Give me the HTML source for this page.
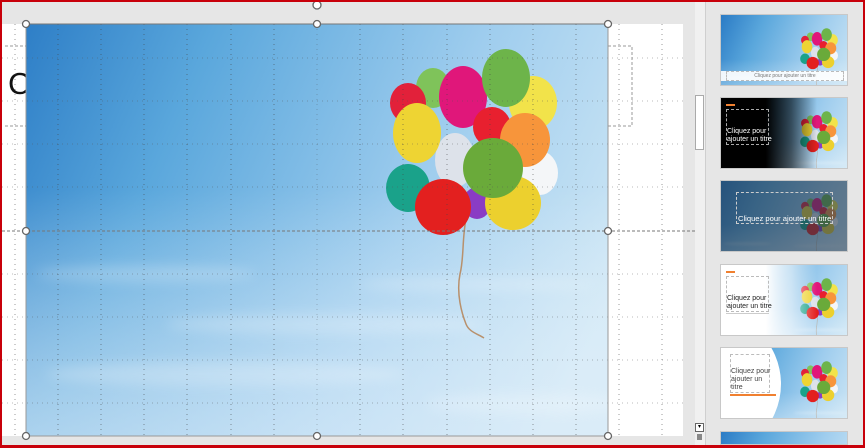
<!DOCTYPE html>
<html><head><meta charset="utf-8"><style>
*{margin:0;padding:0;box-sizing:border-box}
html,body{width:865px;height:448px;overflow:hidden}
body{background:#e6e6e6;font-family:"Liberation Sans",sans-serif;position:relative}
.abs{position:absolute}
.thumb{position:absolute;left:720px;width:128px;height:72px;overflow:hidden;border:1px solid #c8c8c8}
.thumb svg{position:absolute;left:0;top:0}
.tt{position:absolute;font-size:7px;line-height:9px}
.db{position:absolute;border:1px dashed #bbb}
</style></head><body>
<svg width="0" height="0" style="position:absolute">
<defs>
<linearGradient id="sky" x1="0" y1="0" x2="1" y2="0.6">
<stop offset="0" stop-color="#1a6cbd"/><stop offset="0.35" stop-color="#5aa7dc"/><stop offset="0.7" stop-color="#9fcdee"/><stop offset="1" stop-color="#cde6f5"/>
</linearGradient>
<linearGradient id="haze" x1="0" y1="0" x2="0" y2="1">
<stop offset="0.4" stop-color="#fff" stop-opacity="0"/><stop offset="1" stop-color="#e3f0fa" stop-opacity="0.6"/>
</linearGradient>
<filter id="blur"><feGaussianBlur stdDeviation="6"/></filter>
<symbol id="scene" viewBox="0 0 582 412" style="overflow:visible">
<rect x="0" y="-200" width="582" height="800" fill="url(#sky)"/>
<rect x="0" y="0" width="582" height="412" fill="url(#haze)"/>
<g fill="#fff" opacity="0.22" filter="url(#blur)">
<ellipse cx="120" cy="250" rx="110" ry="8"/><ellipse cx="300" cy="300" rx="160" ry="10"/><ellipse cx="450" cy="260" rx="120" ry="7"/><ellipse cx="200" cy="350" rx="180" ry="12"/><ellipse cx="500" cy="380" rx="100" ry="10"/>
</g>
<path d="M440 195 C436 215 438 235 434 250 C430 270 436 290 440 300 C443 308 452 310 458 314" stroke="#b8906c" stroke-width="1.5" fill="none"/>
<g>
<ellipse cx="407" cy="64" rx="17" ry="20" fill="#7fc35a"/>
<ellipse cx="382" cy="79" rx="18" ry="20" fill="#e2213a"/>
<ellipse cx="507" cy="79" rx="24" ry="27" fill="#f2e34a"/>
<ellipse cx="514" cy="149" rx="18" ry="22" fill="#f4f6f8"/>
<ellipse cx="437" cy="73" rx="24" ry="31" fill="#e0177a"/>
<ellipse cx="480" cy="54" rx="24" ry="29" fill="#6db44a"/>
<ellipse cx="466" cy="103" rx="19" ry="20" fill="#e8202f"/>
<ellipse cx="499" cy="116" rx="25" ry="27" fill="#f7953b"/>
<ellipse cx="429" cy="136" rx="20" ry="27" fill="#dde2ea"/>
<ellipse cx="391" cy="109" rx="24" ry="30" fill="#eed433"/>
<ellipse cx="451" cy="179" rx="14" ry="16" fill="#8a3cc4"/>
<ellipse cx="487" cy="179" rx="28" ry="27" fill="#ecd02e"/>
<ellipse cx="382" cy="164" rx="22" ry="24" fill="#1aa28a"/>
<ellipse cx="467" cy="144" rx="30" ry="30" fill="#6aaa3a"/>
<ellipse cx="417" cy="183" rx="28" ry="28" fill="#e3201f"/>
</g>
</symbol>
</defs></svg>

<div class="abs" style="left:2px;top:24px;width:681px;height:412px;background:#fff"></div>
<div class="abs" style="left:8px;top:66px;font-size:31px;font-weight:300;color:#111">C</div>
<svg class="abs" style="left:26px;top:24px" width="582" height="412"><use href="#scene" width="582" height="412"/></svg>
<svg class="abs" style="left:0;top:0" width="695" height="448">
<g stroke="#444" stroke-opacity="0.55" stroke-dasharray="1 4" stroke-width="1">
<line x1="15" y1="24" x2="15" y2="436"/><line x1="58" y1="24" x2="58" y2="436"/><line x1="101" y1="24" x2="101" y2="436"/><line x1="144" y1="24" x2="144" y2="436"/><line x1="187" y1="24" x2="187" y2="436"/><line x1="231" y1="24" x2="231" y2="436"/><line x1="274" y1="24" x2="274" y2="436"/><line x1="317" y1="24" x2="317" y2="436" stroke-opacity="0.3"/><line x1="360" y1="24" x2="360" y2="436"/><line x1="403" y1="24" x2="403" y2="436"/><line x1="447" y1="24" x2="447" y2="436"/><line x1="490" y1="24" x2="490" y2="436"/><line x1="533" y1="24" x2="533" y2="436"/><line x1="576" y1="24" x2="576" y2="436"/><line x1="619" y1="24" x2="619" y2="436"/><line x1="662" y1="24" x2="662" y2="436"/>
</g>
<g stroke="#555" stroke-opacity="0.4" stroke-dasharray="1 4">
<line x1="2" y1="58" x2="683" y2="58"/><line x1="2" y1="101" x2="683" y2="101"/><line x1="2" y1="144" x2="683" y2="144"/><line x1="2" y1="187" x2="683" y2="187"/><line x1="2" y1="274" x2="683" y2="274"/><line x1="2" y1="317" x2="683" y2="317"/><line x1="2" y1="360" x2="683" y2="360"/><line x1="2" y1="403" x2="683" y2="403"/>
</g>
<line x1="2" y1="231" x2="695" y2="231" stroke="#777" stroke-dasharray="3 2"/>
<path d="M5 46 H26 M5 126 H26 M608 46 H632 V126 H608" stroke="#999" fill="none" stroke-dasharray="3 2"/>
<rect x="26" y="24" width="582" height="412" fill="none" stroke="#999"/>
<line x1="26" y1="24" x2="608" y2="24" stroke="#777"/>
<g fill="#fff" stroke="#666" stroke-width="1.3">
<circle cx="26" cy="24" r="3.5"/><circle cx="317" cy="24" r="3.5"/><circle cx="608" cy="24" r="3.5"/><circle cx="26" cy="231" r="3.5"/><circle cx="608" cy="231" r="3.5"/><circle cx="26" cy="436" r="3.5"/><circle cx="317" cy="436" r="3.5"/><circle cx="608" cy="436" r="3.5"/><circle cx="317" cy="5" r="4"/>
</g>
</svg>

<div class="abs" style="left:695px;top:2px;width:10px;height:444px;background:#f0f0f0"></div>
<div class="abs" style="left:695px;top:95px;width:9px;height:55px;background:#fff;border:1px solid #aaa"></div>
<div class="abs" style="left:695px;top:423px;width:9px;height:9px;background:#fff;border:1px solid #666;font-size:6px;text-align:center;line-height:7px">▾</div>
<div class="abs" style="left:697px;top:434px;width:5px;height:6px;background:#888"></div>
<div class="abs" style="left:705px;top:2px;width:1px;height:444px;background:#cfcfcf"></div>

<div class="thumb" style="top:14px">
<svg width="128" height="72" viewBox="0 -35 582 327" preserveAspectRatio="none"><use href="#scene" width="582" height="412"/></svg>
<div class="abs" style="left:0;top:56px;width:128px;height:10px;background:rgba(255,255,255,.9)"></div>
<div class="db" style="left:5px;top:56px;width:118px;height:10px"></div>
<div class="tt" style="left:0;width:128px;top:57px;text-align:center;font-size:5px;color:#777">Cliquez pour ajouter un titre</div>
</div>
<div class="thumb" style="top:97px">
<svg width="128" height="72" viewBox="0 -35 582 327" preserveAspectRatio="none"><use href="#scene" width="582" height="412"/></svg>
<div class="abs" style="left:0;top:0;width:128px;height:72px;background:linear-gradient(90deg,#000 0%,#000 35%,rgba(0,0,0,.6) 55%,rgba(0,0,0,0) 75%)"></div>
<div class="abs" style="left:5px;top:6px;width:9px;height:2px;background:#f08030"></div>
<div class="db" style="left:5px;top:11px;width:43px;height:36px;border-color:#aaa"></div>
<div class="tt" style="left:6px;top:30px;color:#fff;font-size:7px;line-height:8px">Cliquez pour<br>ajouter un titre</div>
</div>
<div class="thumb" style="top:180px">
<svg width="128" height="72" viewBox="0 -35 582 327" preserveAspectRatio="none"><use href="#scene" width="582" height="412"/></svg>
<div class="abs" style="left:0;top:0;width:128px;height:72px;background:rgba(35,55,75,.6)"></div>
<div class="db" style="left:15px;top:11px;width:97px;height:32px;border-color:#ccc"></div>
<div class="tt" style="left:17px;top:33px;color:#fff;font-size:7.6px;white-space:nowrap">Cliquez pour ajouter un titre</div>
</div>
<div class="thumb" style="top:264px">
<svg width="128" height="72" viewBox="0 -35 582 327" preserveAspectRatio="none"><use href="#scene" width="582" height="412"/></svg>
<div class="abs" style="left:0;top:0;width:128px;height:72px;background:linear-gradient(90deg,#fff 0%,#fff 35%,rgba(255,255,255,.6) 55%,rgba(255,255,255,0) 75%)"></div>
<div class="abs" style="left:5px;top:6px;width:9px;height:2px;background:#f08030"></div>
<div class="db" style="left:5px;top:11px;width:43px;height:36px"></div>
<div class="abs" style="left:5px;top:48px;width:43px;height:1px;background:#ccc"></div>
<div class="tt" style="left:6px;top:30px;color:#222;font-size:7px;line-height:8px">Cliquez pour<br>ajouter un titre</div>
</div>
<div class="thumb" style="top:347px;background:#fff">
<svg width="128" height="72" viewBox="0 -35 582 327" preserveAspectRatio="none"><use href="#scene" width="582" height="412"/></svg>
<div class="abs" style="left:-100px;top:-40px;width:160px;height:152px;border-radius:50%;background:#fff"></div>
<div class="db" style="left:9px;top:6px;width:40px;height:39px"></div>
<div class="abs" style="left:9px;top:46px;width:46px;height:2px;background:#f08030"></div>
<div class="tt" style="left:10px;top:20px;color:#444;font-size:7px;line-height:8px">Cliquez pour<br>ajouter un<br>titre</div>
</div>
<div class="thumb" style="top:431px;height:14px">
<svg width="128" height="72" viewBox="0 -35 582 327" preserveAspectRatio="none"><use href="#scene" width="582" height="412"/></svg>
</div>

<div class="abs" style="left:0;top:0;width:865px;height:448px;border:2px solid #c8000a;border-bottom-width:3px"></div>
</body></html>
